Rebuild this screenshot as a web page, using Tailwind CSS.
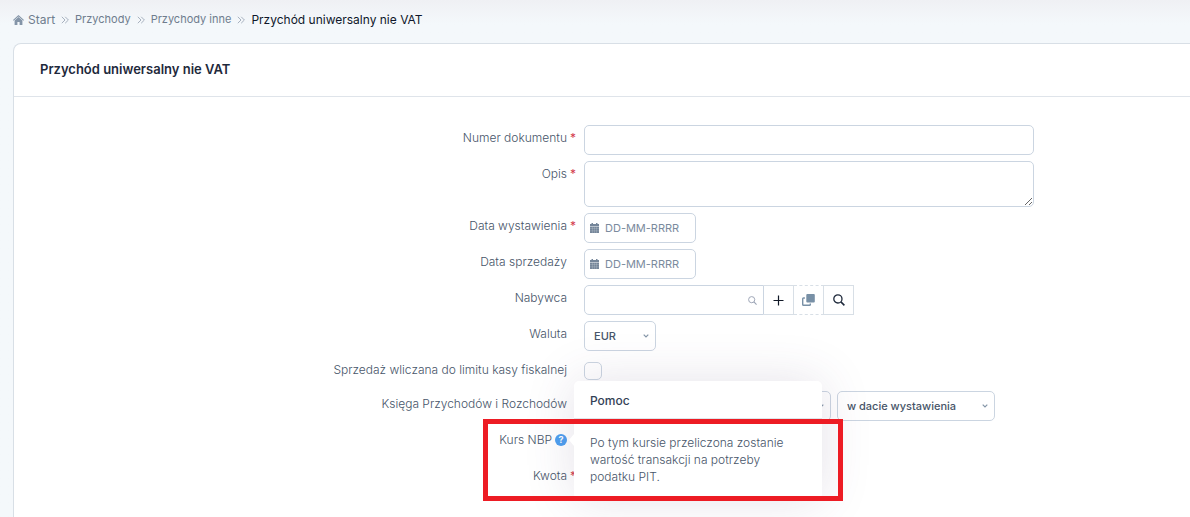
<!DOCTYPE html>
<html lang="pl">
<head>
<meta charset="utf-8">
<meta name="viewport" content="width=device-width, initial-scale=1">
<title>Przychód uniwersalny nie VAT</title>
<script src="https://cdn.jsdelivr.net/npm/@tailwindcss/browser@4"></script>
</head>
<body class="min-h-screen overflow-x-hidden bg-[#f4f7fb] bg-linear-to-b from-[#eff0f4] to-[#f4f8fb] to-[24px] font-['Inter',sans-serif] text-xs text-[#475569]">
<svg class="hidden">
  <symbol id="sep" viewBox="0 0 8 8"><path d="M.8.8 4 4 .8 7.200M4.200.8 7.400 4 4.200 7.200" fill="none" stroke="#a7b1bf" stroke-width="1"/></symbol>
  <symbol id="chev" viewBox="0 0 6 4"><path d="M.7.7 3 3 5.300.7" fill="none" stroke="#8596a8" stroke-width="1.200"/></symbol>
  <symbol id="cal" viewBox="0 0 9 10"><path d="M1.500 0H3v1h3V0h1.500v1H9v2H0V1h1.500zM0 3.600h9V10H0z" fill="#75869a"/><path d="M2.500 3.600V10M4.500 3.600V10M6.500 3.600V10M0 5.500h9M0 7.800h9" stroke="#fff" stroke-opacity=".4" stroke-width=".4"/></symbol>
  <symbol id="mag" viewBox="0 0 12 12"><circle cx="4.900" cy="4.900" r="4.100" fill="none" stroke="currentColor" stroke-width="1.300"/><path d="m7.900 7.900 3.500 3.500" stroke="currentColor" stroke-width="1.500"/></symbol>
</svg>

<nav aria-label="Okruszki" class="flex h-[43px] items-center gap-[6px] pl-[13px] pb-1 text-[11px] text-[#6f7d8e]">
  <a href="#" class="flex items-center gap-1 text-xs">
    <svg class="h-[10px] w-[11px]" viewBox="0 0 11 10"><path d="M5.500 0 11 5l-.7.800L5.500 1.500.7 5.800 0 5z" fill="#8495a8"/><path d="M5.500 1.900 9.400 5.500V10H6.600V7H4.400v3H1.600V5.500z" fill="#8495a8"/></svg>
    Start
  </a>
  <svg class="size-2"><use href="#sep"/></svg>
  <a href="#">Przychody</a>
  <svg class="size-2"><use href="#sep"/></svg>
  <a href="#">Przychody inne</a>
  <svg class="size-2"><use href="#sep"/></svg>
  <span class="text-xs text-[#0f172a]" aria-current="page">Przychód uniwersalny nie VAT</span>
</nav>

<main class="-mr-2 ml-[13px] min-h-[calc(100vh-43px)] rounded-tl-lg border border-b-0 border-[#d8dfe6] bg-white">
  <header class="flex h-[53px] items-center border-b border-[#dfe4ea] pl-[26px]">
    <h1 class="text-[13px] font-semibold text-[#1e293b]">Przychód uniwersalny nie VAT</h1>
  </header>

  <form class="grid grid-cols-[570fr_613fr] gap-y-[6px] pt-7">
    <label for="numer" class="flex justify-end pt-1 leading-[18px] font-light">Numer dokumentu<span class="w-[17px] pl-[3px] font-normal text-[#d33a4c]">*</span></label>
    <div class="h-[30px]"><input id="numer" type="text" class="h-[30px] w-[450px] rounded-[5px] border border-[#cbd5e1] bg-white px-2"></div>

    <label for="opis" class="flex justify-end pt-1 leading-[18px] font-light">Opis<span class="w-[17px] pl-[3px] font-normal text-[#d33a4c]">*</span></label>
    <div class="h-[46px]"><textarea id="opis" class="h-[46px] w-[450px] rounded-[5px] border border-[#cbd5e1] bg-white px-2"></textarea></div>

    <label for="wyst" class="flex justify-end pt-1 leading-[18px] font-light">Data wystawienia<span class="w-[17px] pl-[3px] font-normal text-[#d33a4c]">*</span></label>
    <div class="flex h-[30px] w-[112px] items-center gap-[6px] rounded-[5px] border border-[#cbd5e1] bg-white pl-[5px]">
      <svg class="h-[10px] w-[9px] shrink-0"><use href="#cal"/></svg>
      <input id="wyst" type="text" placeholder="DD-MM-RRRR" class="w-full min-w-0 text-[11px] outline-none placeholder:text-[#7b8b9d]">
    </div>

    <label for="sprz" class="flex justify-end pt-1 pr-[17px] leading-[18px] font-light">Data sprzedaży</label>
    <div class="flex h-[30px] w-[112px] items-center gap-[6px] rounded-[5px] border border-[#cbd5e1] bg-white pl-[5px]">
      <svg class="h-[10px] w-[9px] shrink-0"><use href="#cal"/></svg>
      <input id="sprz" type="text" placeholder="DD-MM-RRRR" class="w-full min-w-0 text-[11px] outline-none placeholder:text-[#7b8b9d]">
    </div>

    <label for="nab" class="flex justify-end pt-1 pr-[17px] leading-[18px] font-light">Nabywca</label>
    <div class="flex h-[30px]">
      <div class="flex w-[180px] items-center rounded-l-[5px] border border-[#cbd5e1] bg-white pr-[6px] text-[#9ba4b5]">
        <input id="nab" type="text" class="min-w-0 flex-1 px-2 outline-none">
        <svg class="size-[9px]"><use href="#mag"/></svg>
      </div>
      <button type="button" aria-label="Dodaj" class="flex w-[30px] items-center justify-center border-y border-r border-[#d8dfe6]"><svg class="size-[11px]" viewBox="0 0 11 11"><path d="M5.500.5v10M.5 5.500h10" stroke="#111827" stroke-width="1.200"/></svg></button>
      <button type="button" aria-label="Kopiuj" class="flex w-[30px] items-center justify-center border-y border-r border-[#d8dfe6] [border-top-style:dashed] [border-bottom-style:dashed]"><svg class="h-[12px] w-[13px]" viewBox="0 0 13 12"><rect x="4.300" y="0" width="8.500" height="8.500" rx="1" fill="#7890a6"/><path d="M2.900 4H1.500a.8.8 0 0 0-.8.800v5.700c0 .5.300.8.800.8h6c.5 0 .8-.3.800-.8V9.500" fill="none" stroke="#7890a6" stroke-width="1.400"/></svg></button>
      <button type="button" aria-label="Szukaj" class="flex w-[30px] items-center justify-center border-y border-r border-[#d8dfe6] text-[#1e293b]"><svg class="size-3"><use href="#mag"/></svg></button>
    </div>

    <label for="wal" class="flex justify-end pt-1 pr-[17px] leading-[18px] font-light">Waluta</label>
    <div class="grid h-[30px] w-[72px] items-center">
      <select id="wal" class="col-start-1 row-start-1 h-[30px] w-full appearance-none rounded-[5px] border border-[#cbd5e1] bg-white pl-[9px] text-[11px] font-medium"><option>EUR</option></select>
      <svg class="pointer-events-none col-start-1 row-start-1 mr-[7px] h-1 w-[6px] justify-self-end"><use href="#chev"/></svg>
    </div>

    <label for="kasa" class="flex justify-end pt-1 pr-[17px] leading-[18px] font-light">Sprzedaż wliczana do limitu kasy fiskalnej</label>
    <div class="h-7 pt-[5px]"><input id="kasa" type="checkbox" class="block size-[18px] appearance-none rounded-[5px] border border-[#cbd5e1] bg-white"></div>

    <label for="kpir" class="flex justify-end pt-1 pr-[17px] leading-[18px] font-light">Księga Przychodów i Rozchodów</label>
    <div class="flex h-[30px] gap-[6px]">
      <div class="grid w-[247px] items-center">
        <select id="kpir" class="col-start-1 row-start-1 h-[30px] w-full appearance-none rounded-[5px] border border-[#cbd5e1] bg-white"><option></option></select>
        <svg class="pointer-events-none col-start-1 row-start-1 mr-[7px] h-1 w-[6px] justify-self-end"><use href="#chev"/></svg>
      </div>
      <div class="grid w-[158px] items-center">
        <select aria-label="Data księgowania" class="col-start-1 row-start-1 h-[30px] w-full appearance-none rounded-[5px] border border-[#cbd5e1] bg-white pl-[9px] text-[11px] font-medium"><option>w dacie wystawienia</option></select>
        <svg class="pointer-events-none col-start-1 row-start-1 mr-[7px] h-1 w-[6px] justify-self-end"><use href="#chev"/></svg>
      </div>
    </div>

    <div class="flex items-start justify-end gap-[3px] pt-1 pr-[17px] leading-[18px]">
      <label for="kurs" class="font-light">Kurs NBP</label>
      <div class="relative mt-[3px] size-3">
        <button type="button" aria-label="Pomoc do pola Kurs NBP" aria-describedby="pomoc" class="flex size-3 items-center justify-center rounded-full bg-[#4d9ff0] text-[9px] font-bold text-white">?</button>
        <div id="pomoc" role="tooltip" class="absolute -top-[53px] left-[19px] z-10 h-[118px] w-[248px] rounded-[5px] bg-white shadow-[0_0_50px_rgba(82,63,105,0.15)]">
          <div class="absolute top-[53px] -left-[5px] border-y-[6px] border-r-[5px] border-y-transparent border-r-white"></div>
          <h2 class="h-[38px] border-b border-[#dfe4ea] pt-[11px] pl-4 font-medium text-[#334155]">Pomoc</h2>
          <p class="px-4 pt-[15px] leading-[17px] font-light">Po tym kursie przeliczona zostanie wartość transakcji na potrzeby podatku PIT.</p>
        </div>
        <div class="pointer-events-none absolute -top-[15px] -left-[72px] z-20 h-[82px] w-[360px] border-[5px] border-[#ed1c24]"></div>
      </div>
    </div>
    <div class="h-[30px]"><input id="kurs" type="text" class="h-[30px] w-[112px] rounded-[5px] border border-[#cbd5e1]"></div>

    <label for="kwota" class="flex justify-end pt-1 leading-[18px] font-light">Kwota<span class="w-[17px] pl-[3px] font-normal text-[#d33a4c]">*</span></label>
    <div class="h-[30px]"><input id="kwota" type="text" class="h-[30px] w-[112px] rounded-[5px] border border-[#cbd5e1]"></div>
  </form>
</main>
</body>
</html>
